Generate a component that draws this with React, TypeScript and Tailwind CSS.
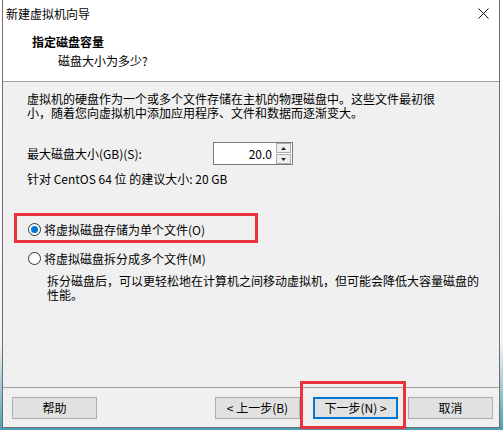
import React from 'react';

const font = "font-['Microsoft_YaHei_UI','Noto_Sans_CJK_SC',sans-serif]";

const Radio: React.FC<{ checked?: boolean }> = ({ checked }) => (
  <span className="w-[13px] h-[13px] rounded-full border border-[#333] bg-white flex items-center justify-center shrink-0">
    {checked && <span className="w-[7px] h-[7px] rounded-full bg-[#0078d7]" />}
  </span>
);

const Btn: React.FC<{ label: string; primary?: boolean }> = ({ label, primary }) => (
  <button
    className={
      'w-[85px] h-[22px] bg-[#e1e1e1] text-[12px] leading-[14px] text-black flex items-center justify-center ' +
      (primary ? 'border-2 border-[#0078d7]' : 'border border-[#adadad]')
    }
  >
    {label}
  </button>
);

export default function App() {
  return (
    <div className={`relative w-[503px] h-[430px] overflow-hidden bg-[linear-gradient(to_bottom,#ffffff_0%,#f4f4f4_80%,#4a9fb5_100%)] ${font} text-black`}>
      <div className="ml-[2px] w-[498px] h-[428px] flex flex-col border-l border-r border-b border-[#6f6f6f] bg-[#f0f0f0]">
        {/* title bar */}
        <div className="h-[27px] bg-white flex items-center justify-between pl-[3px] pr-[8px] text-[12px]">
          <span>新建虚拟机向导</span>
          <svg width="11" height="11" viewBox="0 0 11 11" className="mr-[2px]">
            <path d="M0.5 0.5L10.5 10.5M10.5 0.5L0.5 10.5" stroke="#111" strokeWidth="1" />
          </svg>
        </div>

        {/* header */}
        <div className="h-[55px] bg-white border-b border-[#a0a0a0] pl-[29px] pt-[8px] text-[12px] leading-[14px]">
          <div className="font-bold">指定磁盘容量</div>
          <div className="pl-[26px] mt-[5px]">磁盘大小为多少?</div>
        </div>

        {/* body */}
        <div className="flex-1 px-[24px] text-[12px] leading-[13px] whitespace-nowrap">
          <p className="mt-[10px] leading-[14px]">
            虚拟机的硬盘作为一个或多个文件存储在主机的物理磁盘中。这些文件最初很
            <br />
            小，随着您向虚拟机中添加应用程序、文件和数据而逐渐变大。
          </p>

          <div className="mt-[22px] flex items-center h-[23px]">
            <span className="w-[186px]">最大磁盘大小(GB)(S):</span>
            <div className="flex items-center w-[80px] h-[23px] border border-[#7a7a7a] bg-white">
              <span className="flex-1 text-right pr-[4px]">20.0</span>
              <div className="flex flex-col gap-[1px] mr-[1px]">
                <span className="w-[15px] h-[10px] border border-[#adadad] bg-[#efefef] flex items-center justify-center">
                  <svg width="5" height="3" viewBox="0 0 5 3"><path d="M0 3L2.5 0L5 3Z" fill="#222" /></svg>
                </span>
                <span className="w-[15px] h-[10px] border border-[#adadad] bg-[#efefef] flex items-center justify-center">
                  <svg width="5" height="3" viewBox="0 0 5 3"><path d="M0 0L2.5 3L5 0Z" fill="#222" /></svg>
                </span>
              </div>
            </div>
          </div>

          <div className="mt-[7px]">针对 CentOS 64 位 的建议大小: 20 GB</div>

          <div className="mt-[38px] flex items-center gap-[3px] ml-[1px]">
            <Radio checked />
            <span>将虚拟磁盘存储为单个文件(O)</span>
          </div>

          <div className="mt-[16px] flex items-center gap-[3px] ml-[1px]">
            <Radio />
            <span>将虚拟磁盘拆分成多个文件(M)</span>
          </div>

          <p className="mt-[9px] pl-[20px] leading-[14px]">
            拆分磁盘后，可以更轻松地在计算机之间移动虚拟机，但可能会降低大容量磁盘的
            <br />
            性能。
          </p>
        </div>

        {/* footer */}
        <div className="h-[40px] border-t border-[#a0a0a0] flex items-start pt-[9px] pl-[9px] pr-[6px]">
          <Btn label="帮助" />
          <div className="flex-1" />
          <Btn label="< 上一步(B)" />
          <div className="w-[13px]" />
          <Btn label="下一步(N) >" primary />
          <div className="w-[10px]" />
          <Btn label="取消" />
        </div>
      </div>

      {/* red annotation boxes */}
      <div className="absolute left-[14px] top-[213px] w-[244px] h-[30px] border-[3px] border-[#e8333d]" />
      <div className="absolute left-[300px] top-[381px] w-[106px] h-[48px] border-[3px] border-[#e8333d]" />
    </div>
  );
}
